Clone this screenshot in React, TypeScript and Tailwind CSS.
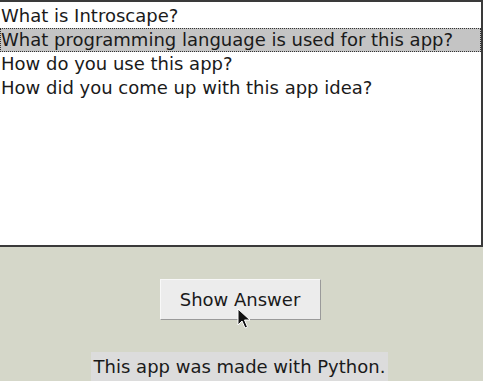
import React from "react";

const questions = [
  "What is Introscape?",
  "What programming language is used for this app?",
  "How do you use this app?",
  "How did you come up with this app idea?",
];

export default function App() {
  return (
    <div
      className="relative w-[483px] h-[381px] overflow-hidden bg-[#d5d7c9] text-[18px] text-[#1a1a1a]"
      style={{ fontFamily: '"DejaVu Sans", sans-serif' }}
    >
      <div className="h-[247px] border-2 border-l-0 border-[#3a3a3a] bg-white pt-[2px]">
        {questions.map((q, i) => (
          <div
            key={q}
            className={
              i === 1
                ? "h-[24px] leading-[22px] whitespace-nowrap border border-dotted border-[#333] bg-[#c4c4c4]"
                : "h-[24px] leading-[22px] whitespace-nowrap border border-transparent"
            }
          >
            {q}
          </div>
        ))}
      </div>

      <div className="flex justify-center pt-[32px]">
        <button className="ml-[-3px] w-[161px] h-[41px] bg-[#ececec] border border-t-[#f8f8f8] border-l-[#f8f8f8] border-r-[#9a9a9a] border-b-[#9a9a9a] text-[18px] text-[#1a1a1a]">
          Show Answer
        </button>
      </div>

      <div className="flex justify-center pt-[32px]">
        <div className="ml-[-4px] bg-[#dcdcdc] px-[3px] pt-[3px] h-[30px] leading-[24px] whitespace-nowrap">
          This app was made with Python.
        </div>
      </div>

      {/* mouse pointer */}
      <svg
        className="absolute left-[237px] top-[308px]"
        width="14"
        height="22"
        viewBox="0 0 14 22"
      >
        <path
          d="M1 1 L1 17 L5 13 L8 20 L10.5 19 L7.5 12 L13 12 Z"
          fill="#111"
          stroke="#fff"
          strokeWidth="1"
          strokeLinejoin="round"
        />
      </svg>
    </div>
  );
}
